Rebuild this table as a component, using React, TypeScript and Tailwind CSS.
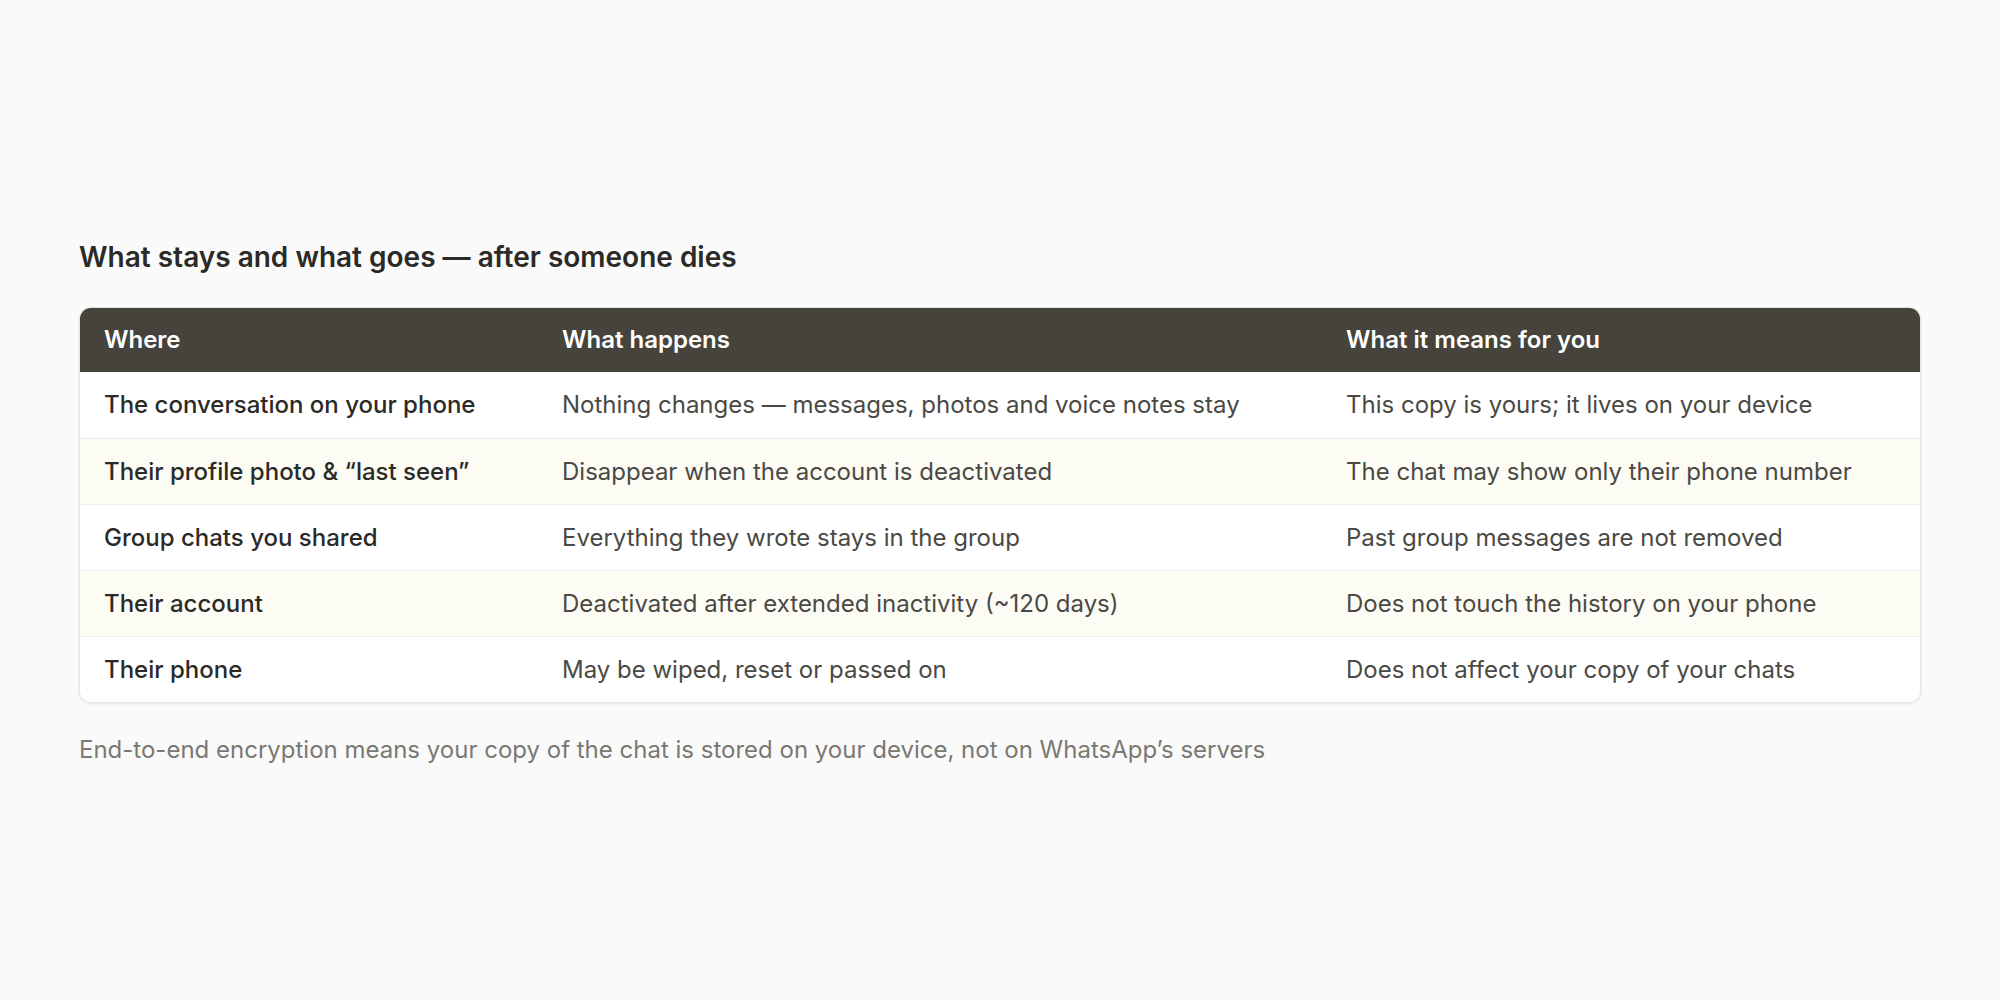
const rows = [
  {
    where: "The conversation on your phone",
    happens: "Nothing changes — messages, photos and voice notes stay",
    means: "This copy is yours; it lives on your device",
  },
  {
    where: "Their profile photo & “last seen”",
    happens: "Disappear when the account is deactivated",
    means: "The chat may show only their phone number",
  },
  {
    where: "Group chats you shared",
    happens: "Everything they wrote stays in the group",
    means: "Past group messages are not removed",
  },
  {
    where: "Their account",
    happens: "Deactivated after extended inactivity (~120 days)",
    means: "Does not touch the history on your phone",
  },
  {
    where: "Their phone",
    happens: "May be wiped, reset or passed on",
    means: "Does not affect your copy of your chats",
  },
];

export default function App() {
  return (
    <div className="min-h-screen bg-[#fafafa] font-['Inter','Liberation_Sans',sans-serif]">
      <div className="px-[79px] pt-[240px]">
        <h2 className="text-[28px] leading-[34px] font-semibold text-[#2b2a27] mb-[33px]">
          What stays and what goes — after someone dies
        </h2>

        <div className="rounded-[12px] border border-[#e4e4e2] bg-white shadow-[0_1px_3px_rgba(0,0,0,0.08)] overflow-hidden">
          <div className="flex bg-[#46433c] text-white text-[24px] font-semibold h-[64px] items-center">
            <div className="w-[458px] px-6">Where</div>
            <div className="w-[784px] px-6">What happens</div>
            <div className="flex-1 px-6">What it means for you</div>
          </div>
          {rows.map((r, i) => (
            <div
              key={r.where}
              className={`flex items-center h-[66px] text-[24px] ${i > 0 ? "border-t border-[#eeeeea]" : ""} ${i % 2 === 1 ? "bg-[#fcfcf5]" : "bg-white"}`}
            >
              <div className="w-[458px] px-6 font-medium text-[#2b2a27]">{r.where}</div>
              <div className="w-[784px] px-6 text-[#4a4944]">{r.happens}</div>
              <div className="flex-1 px-6 text-[#4a4944]">{r.means}</div>
            </div>
          ))}
        </div>

        <p className="mt-[31px] text-[24px] leading-[32px] text-[#7a7872]">
          End-to-end encryption means your copy of the chat is stored on your device, not on WhatsApp’s servers
        </p>
      </div>
    </div>
  );
}
